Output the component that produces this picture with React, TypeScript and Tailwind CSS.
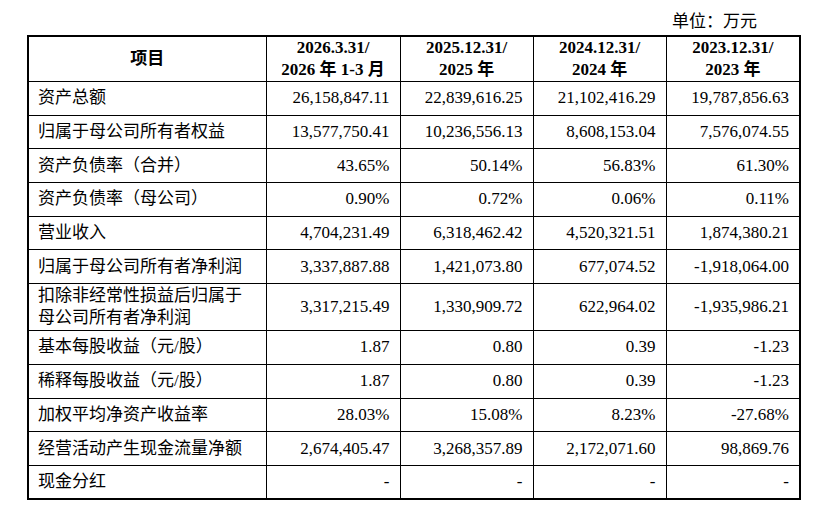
import React from "react";

type Row = { label: string[]; values: string[] };

const serif = "font-['Liberation_Serif','Times_New_Roman','Noto_Sans_CJK_SC',serif]";

const headers = [
  ["2026.3.31/", "2026 年 1-3 月"],
  ["2025.12.31/", "2025 年"],
  ["2024.12.31/", "2024 年"],
  ["2023.12.31/", "2023 年"],
];

const rows: Row[] = [
  { label: ["资产总额"], values: ["26,158,847.11", "22,839,616.25", "21,102,416.29", "19,787,856.63"] },
  { label: ["归属于母公司所有者权益"], values: ["13,577,750.41", "10,236,556.13", "8,608,153.04", "7,576,074.55"] },
  { label: ["资产负债率（合并）"], values: ["43.65%", "50.14%", "56.83%", "61.30%"] },
  { label: ["资产负债率（母公司）"], values: ["0.90%", "0.72%", "0.06%", "0.11%"] },
  { label: ["营业收入"], values: ["4,704,231.49", "6,318,462.42", "4,520,321.51", "1,874,380.21"] },
  { label: ["归属于母公司所有者净利润"], values: ["3,337,887.88", "1,421,073.80", "677,074.52", "-1,918,064.00"] },
  {
    label: ["扣除非经常性损益后归属于", "母公司所有者净利润"],
    values: ["3,317,215.49", "1,330,909.72", "622,964.02", "-1,935,986.21"],
  },
  { label: ["基本每股收益（元/股）"], values: ["1.87", "0.80", "0.39", "-1.23"] },
  { label: ["稀释每股收益（元/股）"], values: ["1.87", "0.80", "0.39", "-1.23"] },
  { label: ["加权平均净资产收益率"], values: ["28.03%", "15.08%", "8.23%", "-27.68%"] },
  { label: ["经营活动产生现金流量净额"], values: ["2,674,405.47", "3,268,357.89", "2,172,071.60", "98,869.76"] },
  { label: ["现金分红"], values: ["-", "-", "-", "-"] },
];

const App = () => {
  return (
    <div className={`w-[830px] h-[524px] bg-white text-black ${serif} text-[17px]`}>
      <div className="flex justify-end pr-[73px] pt-[11px] h-[35px] leading-[22px]">
        单位：万元
      </div>
      <table className="ml-[27px] w-[772px] table-fixed border-collapse border-2 border-black">
        <colgroup>
          <col className="w-[238px]" />
          <col className="w-[134px]" />
          <col className="w-[133px]" />
          <col className="w-[133px]" />
          <col className="w-[134px]" />
        </colgroup>
        <thead>
          <tr className="h-[45px]">
            <th className="border border-black font-bold leading-[22px]">项目</th>
            {headers.map((h) => (
              <th key={h[0]} className="border border-black font-bold leading-[22px]">
                <div>{h[0]}</div>
                <div>{h[1]}</div>
              </th>
            ))}
          </tr>
        </thead>
        <tbody>
          {rows.map((r) => (
            <tr key={r.label.join("")} className={r.label.length > 1 ? "h-[47px]" : "h-[33.7px]"}>
              <td className="border border-black pl-[9px] leading-[22px] text-left">
                {r.label.map((l) => (
                  <div key={l}>{l}</div>
                ))}
              </td>
              {r.values.map((v, i) => (
                <td key={i} className="border border-black pr-[10px] text-right leading-[22px]">
                  {v}
                </td>
              ))}
            </tr>
          ))}
        </tbody>
      </table>
    </div>
  );
};

export default App;
